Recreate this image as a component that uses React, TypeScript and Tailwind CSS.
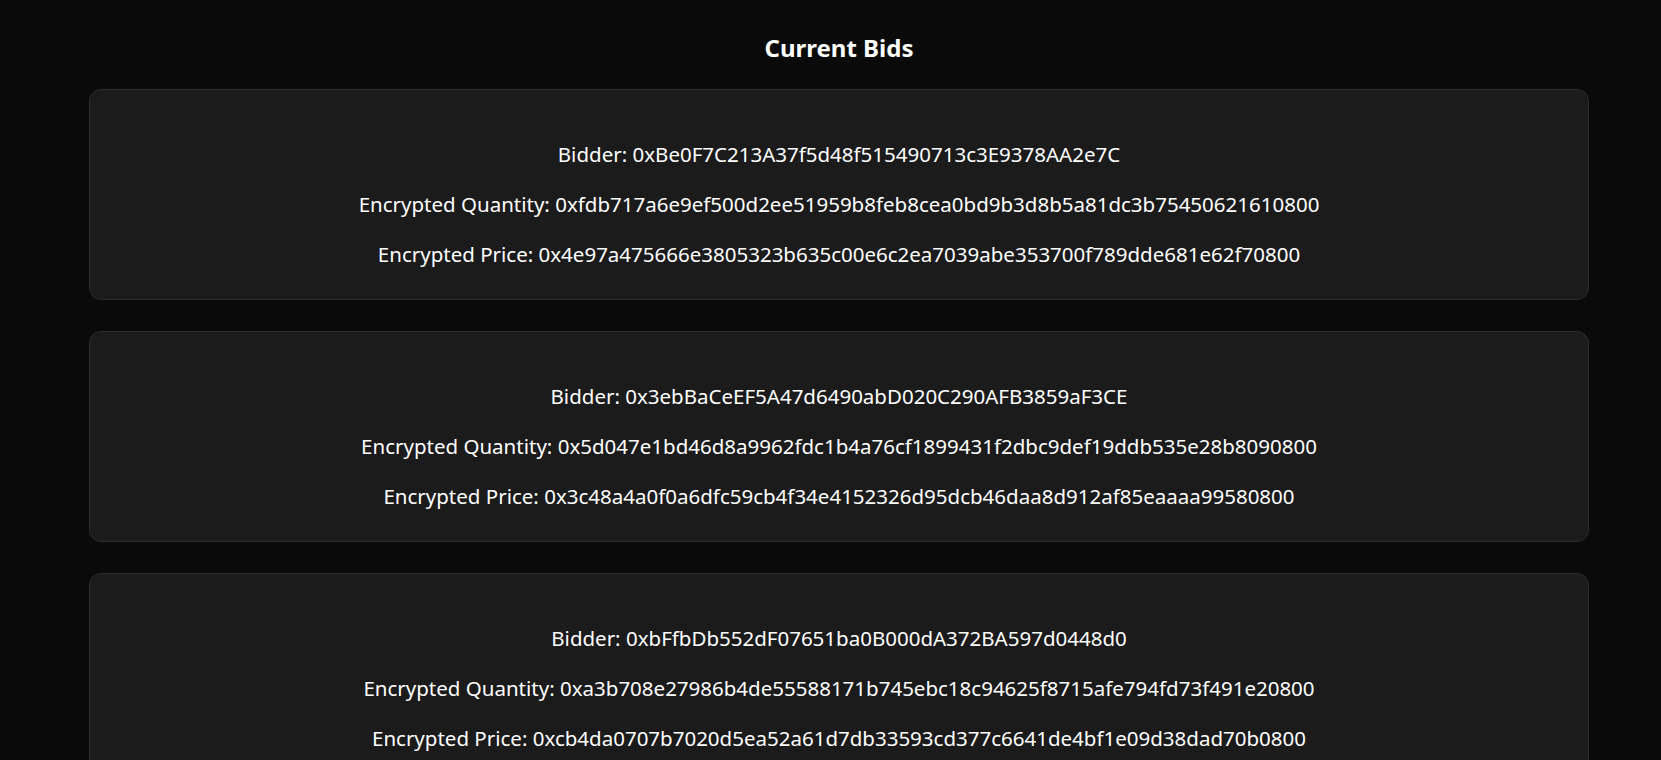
import React from 'react';

const bids = [
  {
    bidder: '0xBe0F7C213A37f5d48f515490713c3E9378AA2e7C',
    quantity: '0xfdb717a6e9ef500d2ee51959b8feb8cea0bd9b3d8b5a81dc3b75450621610800',
    price: '0x4e97a475666e3805323b635c00e6c2ea7039abe353700f789dde681e62f70800',
  },
  {
    bidder: '0x3ebBaCeEF5A47d6490abD020C290AFB3859aF3CE',
    quantity: '0x5d047e1bd46d8a9962fdc1b4a76cf1899431f2dbc9def19ddb535e28b8090800',
    price: '0x3c48a4a0f0a6dfc59cb4f34e4152326d95dcb46daa8d912af85eaaaa99580800',
  },
  {
    bidder: '0xbFfbDb552dF07651ba0B000dA372BA597d0448d0',
    quantity: '0xa3b708e27986b4de55588171b745ebc18c94625f8715afe794fd73f491e20800',
    price: '0xcb4da0707b7020d5ea52a61d7db33593cd377c6641de4bf1e09d38dad70b0800',
  },
];

const App = () => {
  return (
    <div className="min-h-screen bg-[#0a0a0a] text-white font-['Noto_Sans',sans-serif] pt-[32px] pb-10">
      <div className="ml-[89px] w-[1500px]">
        <h2 className="text-center text-[24px] leading-[32px] font-bold mb-[25px]">Current Bids</h2>

        <div className="flex flex-col gap-[31px]">
          {bids.map((bid, index) => (
            <div
              key={index}
              className="bg-[#1b1b1b] border border-[#2c2c2c] rounded-xl pt-[51px] pb-[31px] flex flex-col items-center gap-[23px] text-[20.5px] leading-[27px]"
            >
              <p>Bidder: {bid.bidder}</p>
              <p>Encrypted Quantity: {bid.quantity}</p>
              <p>Encrypted Price: {bid.price}</p>
            </div>
          ))}
        </div>
      </div>
    </div>
  );
};

export default App;
